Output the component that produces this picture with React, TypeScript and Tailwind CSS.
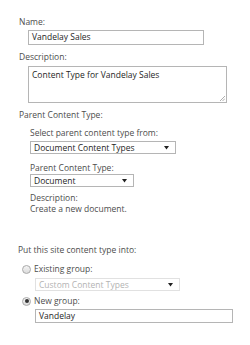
import React from "react";

const Arrow = () => (
    <svg width="5" height="5" viewBox="0 0 5 5" className="shrink-0">
        <polygon points="0,1 5,1 2.5,4.5" fill="#222" />
    </svg>
);

const Select = ({ value, width, muted }: { value: string; width: string; muted?: boolean }) => (
    <div
        className={`flex h-[13px] items-center justify-between border pl-[3px] pr-[6px] ${width} ${
            muted ? "border-[#e1e1e1] text-[#b3b3b3]" : "border-[#b5b5b5] text-[#262626]"
        }`}
    >
        <span className="leading-[11px]">{value}</span>
        <Arrow />
    </div>
);

const Radio = ({ checked }: { checked?: boolean }) => (
    <span className="flex h-[9px] w-[9px] items-center justify-center rounded-full border border-[#a9a9a9] bg-gradient-to-b from-[#f4f4f4] to-[#dcdcdc]">
        {checked && <span className="h-[4px] w-[4px] rounded-full bg-[#333]" />}
    </span>
);

const Label = ({ children, className = "" }: { children: React.ReactNode; className?: string }) => (
    <div className={`h-[12px] leading-[12px] text-[#4d4d4d] ${className}`}>{children}</div>
);

export default function App() {
    return (
        <div className="h-[345px] w-[250px] bg-white pl-[19px] pt-[16px] text-[8.5px] [font-family:'Open_Sans','Noto_Sans',sans-serif]">
            <Label>Name:</Label>
            <div className="ml-[9px] mt-[2px] flex h-[15px] w-[176px] items-center border border-[#b5b5b5] px-[3px] text-[#262626]">
                Vandelay Sales
            </div>

            <Label className="mt-[6px]">Description:</Label>
            <div className="relative ml-[9px] mt-[3px] h-[37px] w-[199px] border border-[#b5b5b5] px-[3px] pt-[2px] leading-[12px] text-[#262626]">
                Content Type for Vandelay Sales
                <svg width="6" height="6" viewBox="0 0 6 6" className="absolute bottom-[1px] right-[1px]">
                    <line x1="1" y1="6" x2="6" y2="1" stroke="#999" strokeWidth="0.8" />
                    <line x1="3.5" y1="6" x2="6" y2="3.5" stroke="#999" strokeWidth="0.8" />
                </svg>
            </div>

            <Label className="mt-[6px]">Parent Content Type:</Label>
            <div className="ml-[11px] flex flex-col">
                <Label className="mt-[6px]">Select parent content type from:</Label>
                <div className="mt-[2px]">
                    <Select value="Document Content Types" width="w-[146px]" />
                </div>
                <Label className="mt-[8px]">Parent Content Type:</Label>
                <Select value="Document" width="w-[104px]" />
                <div className="mt-[5px] leading-[11px] text-[#4d4d4d]">
                    <div>Description:</div>
                    <div>Create a new document.</div>
                </div>
            </div>

            <Label className="mt-[30px] -ml-[1px]">Put this site content type into:</Label>
            <div className="ml-[3px] mt-[7px] flex flex-col">
                <div className="flex h-[12px] items-center gap-[3px]">
                    <Radio />
                    <span className="text-[#4d4d4d]">Existing group:</span>
                </div>
                <div className="ml-[13px] mt-[3px]">
                    <Select value="Custom Content Types" width="w-[145px]" muted />
                </div>
                <div className="mt-[4px] flex h-[12px] items-center gap-[3px]">
                    <Radio checked />
                    <span className="text-[#4d4d4d]">New group:</span>
                </div>
                <div className="ml-[13px] mt-[2px] flex h-[14px] w-[198px] items-center border border-[#b5b5b5] px-[3px] text-[#262626]">
                    Vandelay
                </div>
            </div>
        </div>
    );
}
